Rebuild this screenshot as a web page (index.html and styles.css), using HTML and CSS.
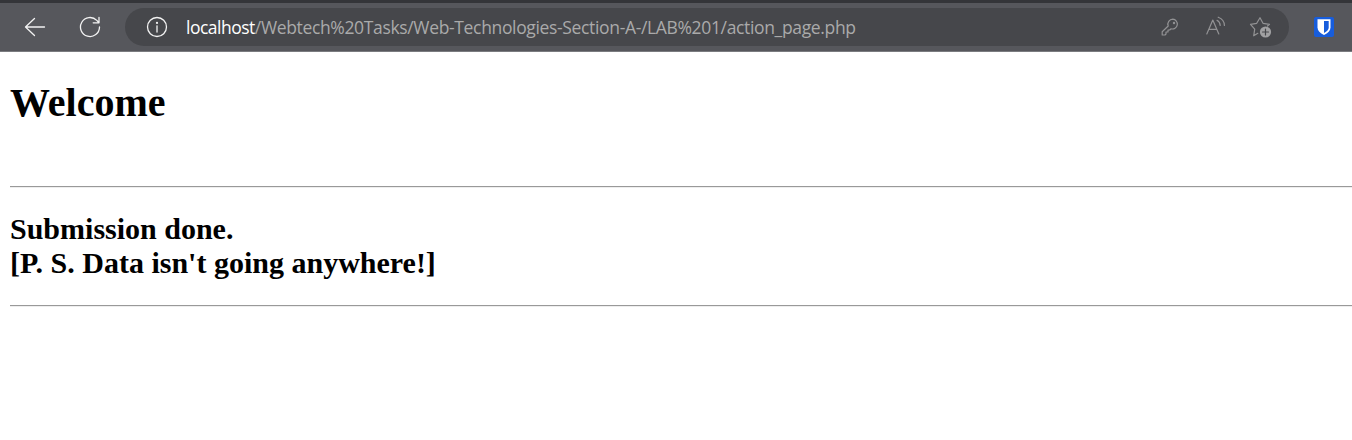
FILE: index.html
```
<!DOCTYPE html>
<html lang="en">
<head>
<meta charset="utf-8">
<title>Welcome</title>
<link rel="stylesheet" href="styles.css">
</head>
<body>
<header class="toolbar">
  <svg class="nav-icon back" viewBox="0 0 22 22"><path d="M20.500 11H1.5M10.500 2.500L1.5 11l9 8.500"/></svg>
  <svg class="nav-icon reload" viewBox="0 0 22 22"><path d="M20.5 11A9.5 9.5 0 1 1 17.8 4.4L19.8 6.5M20 1.500v5.300h-5.800"/></svg>
  <div class="address">
    <svg class="nav-icon info" viewBox="0 0 22 22"><circle cx="11" cy="11" r="9.5"/><path d="M11 9.8v6.2"/><circle class="dot" cx="11" cy="6.9" r="1.1"/></svg>
    <div class="url"><span class="host">localhost</span><span class="path">/Webtech%20Tasks/Web-Technologies-Section-A-/LAB%201/action_page.php</span></div>
    <div class="actions">
      <svg class="action key" viewBox="0 0 18 18"><path d="M11.800 1.200a4.900 4.900 0 1 1-1.700 9.600L8.700 12H7v2H5v2L4 17H1.200v-3.200L7.200 8A5 5 0 0 1 11.800 1.200z"/><circle class="key-hole" cx="13" cy="5" r="1.200"/></svg>
      <svg class="action read" viewBox="0 0 20 20"><path d="M.8 18L6.800 4 12.800 18M2.800 13.300h8M11 4.300c2.100 1.200 3.200 3 3.200 5.200M12.200 1.200c4 1.500 6.200 4.500 6.200 8.300"/></svg>
      <svg class="action star" viewBox="0 0 23 23"><path d="M8.800 17.300L4.700 19.800l1-6.600L1.500 8.300l6.200-1L11 1.700l3 5.600 6.500 1-2 1.700"/><circle class="badge" cx="16.500" cy="16" r="5.600"/><path class="plus" d="M16.500 13v6M13.500 16h6"/></svg>
    </div>
  </div>
  <svg class="shield" viewBox="0 0 20 20"><rect width="20" height="20" rx="2" fill="#175ddc"/><path d="M3.500 2.200h13v8.300c0 3.100-2.500 5.600-6.500 7.500-4-1.900-6.500-4.400-6.500-7.500z" fill="#fff"/><path d="M10 4h4.700v6.500c0 2.100-1.700 3.900-4.700 5.600z" fill="#175ddc"/></svg>
</header>
<main class="page">
  <h1 class="title">Welcome</h1>
  <hr class="rule">
  <h2 class="message">Submission done.<br>[P. S. Data isn't going anywhere!]</h2>
  <hr class="rule">
</main>
</body>
</html>
```
FILE: styles.css
```
body {
  margin: 0;
  background: #fff;
  color: #000;
  font-family: "Liberation Serif", "Times New Roman", serif;
  overflow: hidden;
}
.toolbar {
  box-sizing: border-box;
  height: 52px;
  display: flex;
  align-items: center;
  padding-left: 24px;
  border-top: 3px solid #343539;
  border-bottom: 1px solid #7b7c80;
  background: #56575c;
}
.toolbar svg {
  display: block;
  flex: none;
  fill: none;
  stroke-linecap: round;
  stroke-linejoin: round;
}
.nav-icon {
  width: 22px;
  height: 22px;
  stroke: #f2f2f2;
  stroke-width: 1.3;
}
.reload {
  margin-left: 33px;
}
.nav-icon .dot {
  fill: #f2f2f2;
  stroke: none;
}
.address {
  box-sizing: border-box;
  width: 1164px;
  height: 38px;
  margin-left: 24px;
  padding: 0 17px 0 21px;
  display: flex;
  align-items: center;
  border-radius: 19px;
  background: #46474b;
}
.url {
  margin-left: 18px;
  font: 17.5px/24px "Open Sans", "Noto Sans", sans-serif;
  white-space: nowrap;
  color: #aaa;
}
.host {
  color: #fff;
  letter-spacing: -0.5px;
}
.path {
  letter-spacing: -0.345px;
}
.actions {
  display: flex;
  align-items: center;
  margin-left: auto;
}
.action {
  stroke: #929294;
  stroke-width: 1.2;
}
.key {
  width: 18px;
  height: 18px;
}
.key .key-hole {
  fill: #929294;
  stroke: none;
}
.read {
  width: 20px;
  height: 20px;
  margin-left: 27px;
  margin-bottom: 3px;
}
.star {
  width: 23px;
  height: 23px;
  margin-left: 23px;
}
.star .badge {
  fill: #a0a0a2;
  stroke: none;
}
.star .plus {
  stroke: #46474b;
}
.shield {
  width: 20px;
  height: 20px;
  margin-left: 25px;
}
.page {
  padding-left: 10px;
}
.title {
  margin: 28px 0 60px;
  font-size: 40px;
  line-height: 46px;
}
.rule {
  height: 0;
  margin: 0;
  border: 0;
  border-top: 1px solid #999;
  border-bottom: 1px solid #eee;
}
.message {
  margin: 24px 0 25px;
  font-size: 30px;
  line-height: 34px;
}
```
